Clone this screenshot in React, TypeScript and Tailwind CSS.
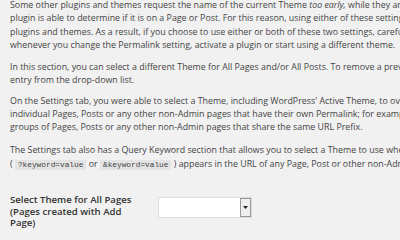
import React from "react";

const code = "bg-[#e3e3e3] px-[3px] py-[1px] text-[7.8px] font-['Liberation_Mono',monospace]";

export default function App() {
  return (
    <div className="w-[400px] h-[240px] overflow-hidden bg-[#f1f1f1] pl-[10px] text-[#444] font-['Open_Sans',sans-serif] text-[8.85px] leading-[13.3px]">
      <div className="-mt-[1px] whitespace-nowrap">
        <p>
          Some other plugins and themes request the name of the current Theme <em>too early,</em> while they are loading
          <br />
          plugin is able to determine if it is on a Page or Post. For this reason, using either of these settings may
          <br />
          plugins and themes. As a result, if you choose to use either or both of these two settings, carefully
          <br />
          whenever you change the Permalink setting, activate a plugin or start using a different theme.
        </p>
        <p className="mt-[9px]">
          In this section, you can select a different Theme for All Pages and/or All Posts. To remove a previously
          <br />
          entry from the drop-down list.
        </p>
        <p className="mt-[7px]">
          On the Settings tab, you were able to select a Theme, including WordPress' Active Theme, to override
          <br />
          individual Pages, Posts or any other non-Admin pages that have their own Permalink; for example
          <br />
          groups of Pages, Posts or any other non-Admin pages that share the same URL Prefix.
        </p>
        <p className="mt-[9px]">
          The Settings tab also has a Query Keyword section that allows you to select a Theme to use when
          <br />
          <span className="inline-block mt-[1px]">
            ( <code className={code}>?keyword=value</code> or <code className={code}>&amp;keyword=value</code> ) appears in the URL of any Page, Post or other non-Admin
          </span>
        </p>
      </div>
      <div className="flex items-start mt-[22px]">
        <div className="w-[148px] shrink-0 font-semibold text-[9.6px] leading-[11.6px] text-[#333]">
          Select Theme for All Pages
          <br />
          (Pages created with Add
          <br />
          Page)
        </div>
        <div className="mt-[3px] flex h-[21px] w-[94px] border border-[#ddd] bg-white">
          <div className="flex-1" />
          <div className="w-[11px] border border-[#999] bg-[#eee] flex items-center justify-center">
            <svg width="5" height="3" viewBox="0 0 5 3">
              <path d="M0 0h5L2.5 3z" fill="#222" />
            </svg>
          </div>
        </div>
      </div>
    </div>
  );
}
